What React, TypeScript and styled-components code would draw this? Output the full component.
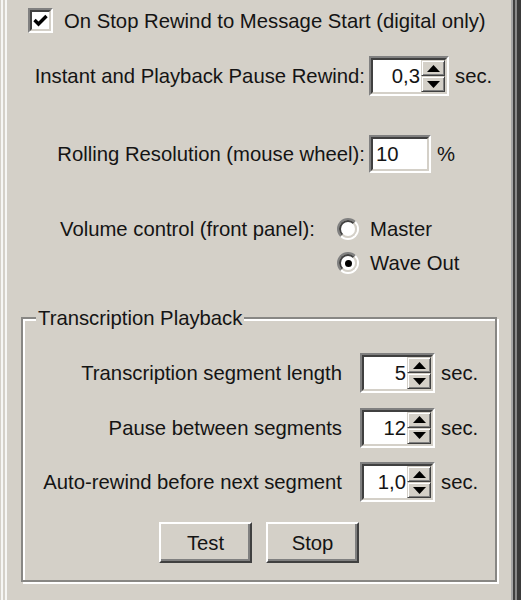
import React from "react";
import styled, { createGlobalStyle } from "styled-components";

const BG = "#d4d0c8";

const GlobalStyle = createGlobalStyle`
  html, body { margin: 0; padding: 0; background: ${BG}; }
  #root { width: 521px; height: 600px; }
`;

const Frame = styled.div`
  width: 521px;
  height: 600px;
  box-sizing: border-box;
  overflow: hidden;
  background: ${BG};
  color: #141414;
  font-family: "Liberation Sans", Arial, sans-serif;
  font-size: 20.3px;
  line-height: 24px;
  padding-top: 8px;
  box-shadow:
    inset 1px 0 0 ${BG},
    inset 3px 0 0 #f6f6f4,
    inset 5px 0 0 ${BG},
    inset 7px 0 0 #f6f6f4,
    inset -4px 0 0 #3a3a3a,
    inset -6px 0 0 #8a8a8a,
    inset -8px 0 0 #404040,
    inset -10px 0 0 #a6a6a6;
`;

const CheckRow = styled.label`
  display: flex;
  align-items: center;
  gap: 11px;
  margin-left: 28px;
  height: 25px;
  white-space: nowrap;
`;

const Sunken = styled.span`
  box-sizing: border-box;
  border: 2px solid;
  border-color: #808080 #fff #fff #808080;
  display: flex;
`;

const SunkenInner = styled.span`
  flex: 1;
  display: flex;
  align-items: center;
  background: #fff;
  border: 2px solid;
  border-color: #404040 ${BG} ${BG} #404040;
  min-width: 0;
`;

const CheckBox = styled(Sunken)`
  width: 25px;
  height: 25px;
  flex: none;
`;

const CheckFace = styled(SunkenInner)`
  justify-content: center;
`;

const FieldGrid = styled.div`
  display: grid;
  grid-template-columns: 365px 1fr;
  column-gap: 4px;
  row-gap: 39px;
  align-items: center;
  margin-top: 23px;
`;

const Control = styled.div`
  display: flex;
  align-items: center;
  gap: 6px;
`;

const Label = styled.span<{ $pad?: number }>`
  text-align: right;
  white-space: nowrap;
  padding-right: ${(p) => p.$pad ?? 0}px;
`;

const Unit = styled.span`
  white-space: nowrap;
`;

const Box = styled(Sunken)<{ $w: number; $h: number }>`
  width: ${(p) => p.$w}px;
  height: ${(p) => p.$h}px;
`;

const Value = styled.span<{ $align: "left" | "right" }>`
  flex: 1;
  text-align: ${(p) => p.$align};
  padding: 0 ${(p) => (p.$align === "right" ? 1 : 0)}px 0 ${(p) => (p.$align === "left" ? 3 : 0)}px;
`;

const Spinner = styled.span`
  width: 24px;
  align-self: stretch;
  display: flex;
  flex-direction: column;
`;

const SpinBtn = styled.span`
  flex: 1;
  background: ${BG};
  box-sizing: border-box;
  border: 1px solid;
  border-color: ${BG} #404040 #404040 ${BG};
  box-shadow: inset 1px 1px 0 #fff, inset -1px -1px 0 #808080;
  display: flex;
  align-items: center;
  justify-content: center;
`;

const RadioSection = styled.div`
  display: grid;
  grid-template-columns: 277px auto;
  margin-left: 60px;
  margin-top: 45px;
  line-height: 22px;
`;

const RadioGroup = styled.div`
  display: flex;
  flex-direction: column;
  gap: 12px;
`;

const RadioRow = styled.label`
  display: flex;
  align-items: center;
  gap: 11px;
  height: 22px;
`;

const RadioOuter = styled.span`
  width: 22px;
  height: 22px;
  box-sizing: border-box;
  border-radius: 50%;
  border: 2px solid;
  border-color: #808080 #fff #fff #808080;
  display: flex;
`;

const RadioInner = styled.span`
  flex: 1;
  border-radius: 50%;
  background: #fff;
  border: 2px solid;
  border-color: #404040 ${BG} ${BG} #404040;
  display: flex;
  align-items: center;
  justify-content: center;
`;

const Dot = styled.span`
  width: 7px;
  height: 7px;
  border-radius: 50%;
  background: #000;
`;

const Group = styled.fieldset`
  box-sizing: border-box;
  width: 476px;
  margin: 32px 0 0 21px;
  padding: 0 0 17px 0;
  border: 2px solid #888784;
  box-shadow: inset 2px 2px 0 #fff, 2px 2px 0 #fff;
  min-inline-size: 0;
`;

const Legend = styled.legend`
  margin-left: 13px;
  padding: 0 2px;
  line-height: 24px;
  background: ${BG};
`;

const GroupGrid = styled.div`
  display: grid;
  grid-template-columns: 330px 1fr;
  column-gap: 7px;
  row-gap: 14.5px;
  align-items: center;
  margin-top: 23px;
`;

const ButtonRow = styled.div`
  display: flex;
  justify-content: center;
  gap: 14px;
  margin-top: 20px;
`;

const Button = styled.button`
  width: 93px;
  height: 41px;
  box-sizing: border-box;
  background: ${BG};
  color: #141414;
  font: inherit;
  border: 2px solid;
  border-color: #fff #404040 #404040 #fff;
  box-shadow: inset -2px -2px 0 #808080;
  padding: 0;
`;

const Up = () => (
  <svg width="13" height="7" viewBox="0 0 13 7">
    <polygon points="0,7 6.5,0 13,7" fill="#000" />
  </svg>
);
const Down = () => (
  <svg width="13" height="7" viewBox="0 0 13 7">
    <polygon points="0,0 13,0 6.5,7" fill="#000" />
  </svg>
);

const Spin: React.FC<{ value: string; w: number }> = ({ value, w }) => (
  <Box $w={w} $h={40}>
    <SunkenInner>
      <Value $align="right">{value}</Value>
      <Spinner>
        <SpinBtn>
          <Up />
        </SpinBtn>
        <SpinBtn>
          <Down />
        </SpinBtn>
      </Spinner>
    </SunkenInner>
  </Box>
);

const Radio: React.FC<{ checked?: boolean; label: string }> = ({ checked, label }) => (
  <RadioRow>
    <RadioOuter>
      <RadioInner>{checked && <Dot />}</RadioInner>
    </RadioOuter>
    {label}
  </RadioRow>
);

export default function App() {
  return (
    <>
      <GlobalStyle />
      <Frame>
        <CheckRow>
          <CheckBox>
            <CheckFace>
              <svg width="15" height="13" viewBox="0 0 15 13">
                <polyline points="1.5,6 5.5,10 13.5,2" fill="none" stroke="#000" strokeWidth="3.4" />
              </svg>
            </CheckFace>
          </CheckBox>
          On Stop Rewind to Message Start (digital only)
        </CheckRow>

        <FieldGrid>
          <Label>Instant and Playback Pause Rewind:</Label>
          <Control>
            <Spin value="0,3" w={80} />
            <Unit>sec.</Unit>
          </Control>

          <Label>Rolling Resolution (mouse wheel):</Label>
          <Control>
            <Box $w={62} $h={38}>
              <SunkenInner>
                <Value $align="left">10</Value>
              </SunkenInner>
            </Box>
            <Unit>%</Unit>
          </Control>
        </FieldGrid>

        <RadioSection>
          <span>Volume control (front panel):</span>
          <RadioGroup>
            <Radio label="Master" />
            <Radio label="Wave Out" checked />
          </RadioGroup>
        </RadioSection>

        <Group>
          <Legend>Transcription Playback</Legend>
          <GroupGrid>
            <Label $pad={11}>Transcription segment length</Label>
            <Control>
              <Spin value="5" w={75} />
              <Unit>sec.</Unit>
            </Control>

            <Label $pad={11}>Pause between segments</Label>
            <Control>
              <Spin value="12" w={75} />
              <Unit>sec.</Unit>
            </Control>

            <Label $pad={11}>Auto-rewind before next segment</Label>
            <Control>
              <Spin value="1,0" w={75} />
              <Unit>sec.</Unit>
            </Control>
          </GroupGrid>
          <ButtonRow>
            <Button>Test</Button>
            <Button>Stop</Button>
          </ButtonRow>
        </Group>
      </Frame>
    </>
  );
}
